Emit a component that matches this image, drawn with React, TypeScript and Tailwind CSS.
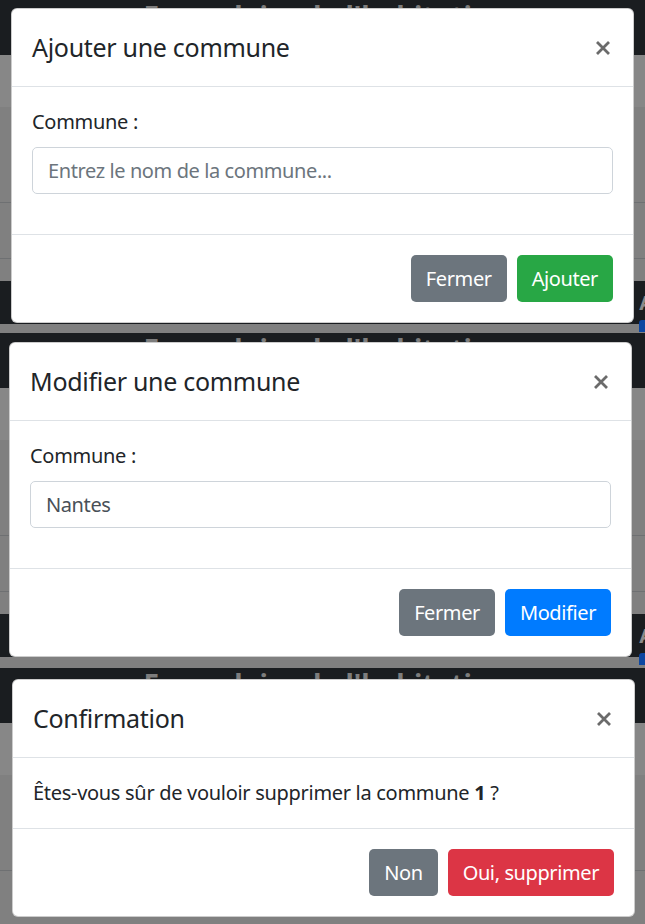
import React from "react";

const font = "font-['Noto_Sans','Open_Sans',sans-serif]";

function CloseIcon() {
  return (
    <svg width="14" height="14" viewBox="0 0 14 14" className="block">
      <path d="M1 1 L13 13 M13 1 L1 13" stroke="#6b6b6b" strokeWidth="2.8" strokeLinecap="butt" />
    </svg>
  );
}

function Header({ title }: { title: string }) {
  return (
    <div className="flex items-center justify-between px-5 h-[78px] border-b border-[#dee2e6]">
      <h5 className="text-[25px] leading-[37.5px] font-normal tracking-[-0.3px] text-[#212529]">{title}</h5>
      <div className="pr-[3px]">
        <CloseIcon />
      </div>
    </div>
  );
}

function Btn({ label, color }: { label: string; color: string }) {
  return (
    <button
      className={`h-[47px] px-[15px] rounded-[5px] text-[20px] leading-[30px] tracking-[-0.4px] text-white ${color}`}
    >
      {label}
    </button>
  );
}

function Footer({ children }: { children: React.ReactNode }) {
  return (
    <div className="flex justify-end items-center gap-[10px] px-5 pt-5 pb-5 h-[88px] border-t border-[#dee2e6]">
      {children}
    </div>
  );
}

function BackgroundPage({ height, short }: { height: number; short?: boolean }) {
  return (
    <div className="flex flex-col" style={{ height }}>
      <div className="h-[55px] bg-[#1a1d20] flex justify-center shrink-0 overflow-hidden">
        <div className="text-[28px] leading-none font-bold text-[#7d7d7d] pt-[2px] pl-[6px]">
          Formulaire de l'habitation
        </div>
      </div>
      <div className="h-[52px] bg-[#878787] shrink-0" />
      <div className="h-[96px] bg-[#808080] border-b border-[#6e7072] shrink-0" />
      <div className="h-[56px] bg-[#808080] border-b border-[#6e7072] shrink-0" />
      {short ? (
        <div className="flex-1 bg-[#808080]" />
      ) : (
        <>
          <div className="h-[22px] bg-[#808080] shrink-0" />
          <div className="h-[43px] bg-[#1a1d20] shrink-0 flex justify-end items-center">
            <span className="text-[20px] font-bold text-[#8a8a8a] leading-none mr-[-8px]">A</span>
          </div>
          <div className="flex-1 bg-[#808080] flex justify-end items-start">
            <div className="w-[6px] h-[12px] bg-[#0d47a1] rounded-tl-[3px] mt-[-4px]" />
          </div>
        </>
      )}
    </div>
  );
}

function Section({
  height,
  top,
  left,
  short,
  children,
}: {
  height: number;
  top: number;
  left: number;
  short?: boolean;
  children: React.ReactNode;
}) {
  return (
    <div className="relative overflow-hidden" style={{ height }}>
      <BackgroundPage height={height} short={short} />
      <div
        className="absolute w-[623px] bg-white rounded-[6px] border border-black/20 overflow-hidden"
        style={{ top, left }}
      >
        {children}
      </div>
    </div>
  );
}

export default function App() {
  return (
    <div className={`${font} w-[645px] h-[924px] overflow-hidden bg-[#808080]`}>
      <Section height={333} top={8} left={11}>
        <Header title="Ajouter une commune" />
        <div className="p-5 pb-10">
          <label className="block text-[20px] leading-[30px] tracking-[-0.3px] text-[#212529] mb-[10px]">Commune :</label>
          <input
            className="block w-full h-[47px] px-[15px] text-[20px] tracking-[-0.4px] rounded-[5px] border border-[#ced4da] text-[#495057] placeholder:text-[#6c757d] outline-none"
            placeholder="Entrez le nom de la commune..."
          />
        </div>
        <Footer>
          <Btn label="Fermer" color="bg-[#6c757d]" />
          <Btn label="Ajouter" color="bg-[#28a745]" />
        </Footer>
      </Section>
      <Section height={335} top={9} left={9}>
        <Header title="Modifier une commune" />
        <div className="p-5 pb-10">
          <label className="block text-[20px] leading-[30px] tracking-[-0.3px] text-[#212529] mb-[10px]">Commune :</label>
          <input
            className="block w-full h-[47px] px-[15px] text-[20px] tracking-[-0.4px] rounded-[5px] border border-[#ced4da] text-[#495057] outline-none"
            defaultValue="Nantes"
          />
        </div>
        <Footer>
          <Btn label="Fermer" color="bg-[#6c757d]" />
          <Btn label="Modifier" color="bg-[#007bff]" />
        </Footer>
      </Section>
      <Section height={256} top={11} left={12} short>
        <Header title="Confirmation" />
        <div className="p-5">
          <p className="text-[20px] leading-[30px] tracking-[-0.3px] text-[#212529]">
            Êtes-vous sûr de vouloir supprimer la commune <b>1</b> ?
          </p>
        </div>
        <Footer>
          <Btn label="Non" color="bg-[#6c757d]" />
          <Btn label="Oui, supprimer" color="bg-[#dc3545]" />
        </Footer>
      </Section>
    </div>
  );
}
